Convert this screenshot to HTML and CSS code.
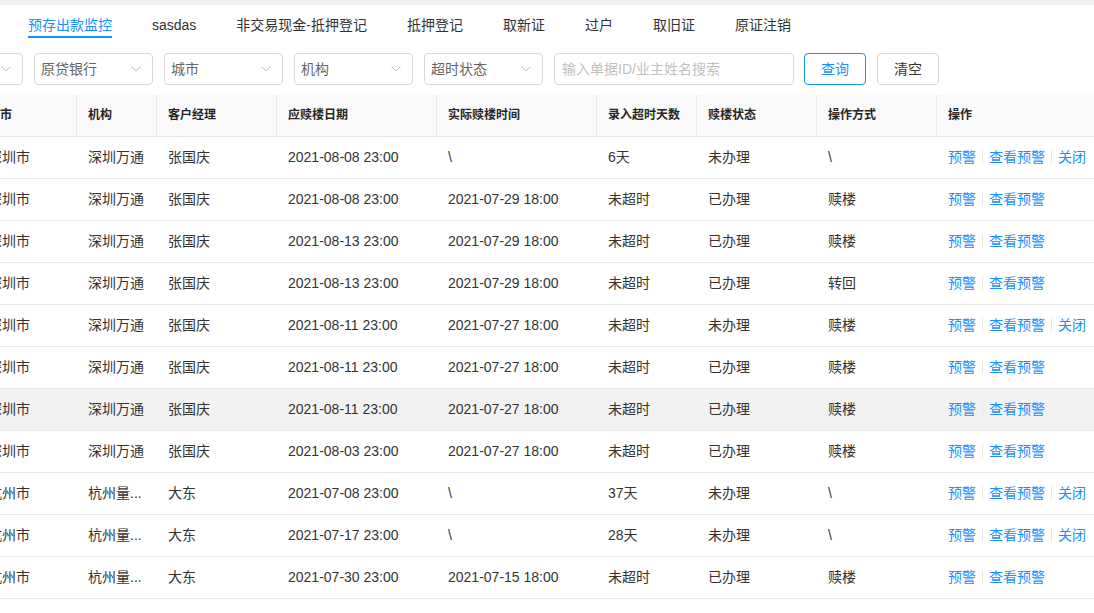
FILE: index.html
```html
<!DOCTYPE html>
<html lang="zh-CN">
<head>
<meta charset="utf-8">
<title>预存出款监控</title>
<link rel="stylesheet" href="styles.css">
</head>
<body>
<div class="topband"></div>
<nav class="tabs">
  <a class="tab active">预存出款监控</a>
  <a class="tab">sasdas</a>
  <a class="tab">非交易现金-抵押登记</a>
  <a class="tab">抵押登记</a>
  <a class="tab">取新证</a>
  <a class="tab">过户</a>
  <a class="tab">取旧证</a>
  <a class="tab">原证注销</a>
</nav>
<div class="viewport">
  <div class="filters">
    <div class="select"><span class="sel-text">城市</span><svg class="chev" width="10" height="6" viewBox="0 0 10 6"><polyline points="0.5,0.5 5,5 9.5,0.5" fill="none" stroke="#bfbfbf" stroke-width="1"/></svg></div>
    <div class="select"><span class="sel-text">原贷银行</span><svg class="chev" width="10" height="6" viewBox="0 0 10 6"><polyline points="0.5,0.5 5,5 9.5,0.5" fill="none" stroke="#bfbfbf" stroke-width="1"/></svg></div>
    <div class="select"><span class="sel-text">城市</span><svg class="chev" width="10" height="6" viewBox="0 0 10 6"><polyline points="0.5,0.5 5,5 9.5,0.5" fill="none" stroke="#bfbfbf" stroke-width="1"/></svg></div>
    <div class="select"><span class="sel-text">机构</span><svg class="chev" width="10" height="6" viewBox="0 0 10 6"><polyline points="0.5,0.5 5,5 9.5,0.5" fill="none" stroke="#bfbfbf" stroke-width="1"/></svg></div>
    <div class="select"><span class="sel-text">超时状态</span><svg class="chev" width="10" height="6" viewBox="0 0 10 6"><polyline points="0.5,0.5 5,5 9.5,0.5" fill="none" stroke="#bfbfbf" stroke-width="1"/></svg></div>
    <div class="search"><span class="placeholder">输入单据ID/业主姓名搜索</span></div>
    <button class="btn primary">查询</button>
    <button class="btn">清空</button>
  </div>

  <table class="grid">
    <colgroup>
      <col class="w100"><col class="w80"><col class="w120"><col class="w160"><col class="w160"><col class="w100"><col class="w120"><col class="w120"><col class="w170">
    </colgroup>
    <thead>
      <tr>
        <th>城市</th><th>机构</th><th>客户经理</th><th>应赎楼日期</th><th>实际赎楼时间</th><th>录入超时天数</th><th>赎楼状态</th><th>操作方式</th><th class="last">操作</th>
      </tr>
    </thead>
    <tbody>
      <tr><td>深圳市</td><td>深圳万通</td><td>张国庆</td><td>2021-08-08 23:00</td><td>\</td><td>6天</td><td>未办理</td><td>\</td><td><a>预警</a><i class="sep"></i><a>查看预警</a><i class="sep"></i><a>关闭</a></td></tr>
      <tr><td>深圳市</td><td>深圳万通</td><td>张国庆</td><td>2021-08-08 23:00</td><td>2021-07-29 18:00</td><td>未超时</td><td>已办理</td><td>赎楼</td><td><a>预警</a><i class="sep"></i><a>查看预警</a></td></tr>
      <tr><td>深圳市</td><td>深圳万通</td><td>张国庆</td><td>2021-08-13 23:00</td><td>2021-07-29 18:00</td><td>未超时</td><td>已办理</td><td>赎楼</td><td><a>预警</a><i class="sep"></i><a>查看预警</a></td></tr>
      <tr><td>深圳市</td><td>深圳万通</td><td>张国庆</td><td>2021-08-13 23:00</td><td>2021-07-29 18:00</td><td>未超时</td><td>已办理</td><td>转回</td><td><a>预警</a><i class="sep"></i><a>查看预警</a></td></tr>
      <tr><td>深圳市</td><td>深圳万通</td><td>张国庆</td><td>2021-08-11 23:00</td><td>2021-07-27 18:00</td><td>未超时</td><td>未办理</td><td>赎楼</td><td><a>预警</a><i class="sep"></i><a>查看预警</a><i class="sep"></i><a>关闭</a></td></tr>
      <tr><td>深圳市</td><td>深圳万通</td><td>张国庆</td><td>2021-08-11 23:00</td><td>2021-07-27 18:00</td><td>未超时</td><td>已办理</td><td>赎楼</td><td><a>预警</a><i class="sep"></i><a>查看预警</a></td></tr>
      <tr class="hover"><td>深圳市</td><td>深圳万通</td><td>张国庆</td><td>2021-08-11 23:00</td><td>2021-07-27 18:00</td><td>未超时</td><td>已办理</td><td>赎楼</td><td><a>预警</a><i class="sep"></i><a>查看预警</a></td></tr>
      <tr><td>深圳市</td><td>深圳万通</td><td>张国庆</td><td>2021-08-03 23:00</td><td>2021-07-27 18:00</td><td>未超时</td><td>已办理</td><td>赎楼</td><td><a>预警</a><i class="sep"></i><a>查看预警</a></td></tr>
      <tr><td>杭州市</td><td>杭州量...</td><td>大东</td><td>2021-07-08 23:00</td><td>\</td><td>37天</td><td>未办理</td><td>\</td><td><a>预警</a><i class="sep"></i><a>查看预警</a><i class="sep"></i><a>关闭</a></td></tr>
      <tr><td>杭州市</td><td>杭州量...</td><td>大东</td><td>2021-07-17 23:00</td><td>\</td><td>28天</td><td>未办理</td><td>\</td><td><a>预警</a><i class="sep"></i><a>查看预警</a><i class="sep"></i><a>关闭</a></td></tr>
      <tr><td>杭州市</td><td>杭州量...</td><td>大东</td><td>2021-07-30 23:00</td><td>2021-07-15 18:00</td><td>未超时</td><td>已办理</td><td>赎楼</td><td><a>预警</a><i class="sep"></i><a>查看预警</a></td></tr>
    </tbody>
  </table>
</div>
</body>
</html>
```
FILE: styles.css
```css
* { box-sizing: border-box; }
html, body {
  margin: 0;
  padding: 0;
  background: #fff;
  overflow: hidden;
}
body {
  font-family: "Liberation Sans", Arial, "Noto Sans CJK SC", sans-serif;
  font-size: 14px;
  color: #333;
  width: 1094px;
  height: 613px;
}
.topband {
  height: 5px;
  background: #f0f2f5;
}
.tabs {
  display: flex;
  gap: 40px;
  padding-left: 28px;
}
.tab {
  display: block;
  padding-top: 10px;
  line-height: 21px;
  height: 33px;
  border-bottom: 2px solid transparent;
  color: #333;
  white-space: nowrap;
}
.tab.active {
  color: #1890ff;
  border-bottom-color: #1890ff;
}
.viewport {
  overflow: hidden;
  width: 1094px;
}
.filters {
  display: flex;
  gap: 11px;
  margin-top: 15px;
  margin-left: -96px;
  height: 32px;
}
.select {
  flex: none;
  width: 119px;
  height: 32px;
  border: 1px solid #d9d9d9;
  border-radius: 4px;
  display: flex;
  align-items: center;
  justify-content: space-between;
  padding: 0 11px 0 6px;
  color: #666;
  line-height: 20px;
}
.chev { display: block; flex: none; }
.search {
  flex: none;
  width: 240px;
  height: 32px;
  border: 1px solid #d9d9d9;
  border-radius: 4px;
  display: flex;
  align-items: center;
  padding: 0 7px;
  line-height: 20px;
}
.placeholder { color: #bfbfbf; }
.btn {
  flex: none;
  width: 62px;
  height: 32px;
  border: 1px solid #d9d9d9;
  border-radius: 4px;
  background: #fff;
  font: inherit;
  color: #333;
  padding: 0;
  line-height: 20px;
}
.btn.primary {
  margin-left: -1px;
  border-color: #1890ff;
  color: #1890ff;
}
.grid {
  margin-top: 10px;
  margin-left: -23px;
  border-collapse: separate;
  border-spacing: 0;
  table-layout: fixed;
  width: 1130px;
}
.w80 { width: 80px; }
.w100 { width: 100px; }
.w120 { width: 120px; }
.w160 { width: 160px; }
.w170 { width: 170px; }
.grid th, .grid td {
  height: 42px;
  padding: 0 10px 1px 11px;
  border-bottom: 1px solid #e8e8e8;
  text-align: left;
  white-space: nowrap;
  overflow: hidden;
  vertical-align: middle;
}
.grid th {
  background: #fafafa;
  font-size: 12px;
  font-weight: bold;
  color: #262626;
  border-right: 1px solid #e8e8e8;
  padding-bottom: 4px;
}
.grid th.last { border-right: none; }
.grid td { color: #333; line-height: 20px; }
.grid tr.hover td { background: #f2f2f2; }
.grid a { color: #1890ff; }
.sep {
  display: inline-block;
  width: 1px;
  height: 14px;
  background: #e8e8e8;
  margin: 0 6px;
  vertical-align: -2px;
}
```
